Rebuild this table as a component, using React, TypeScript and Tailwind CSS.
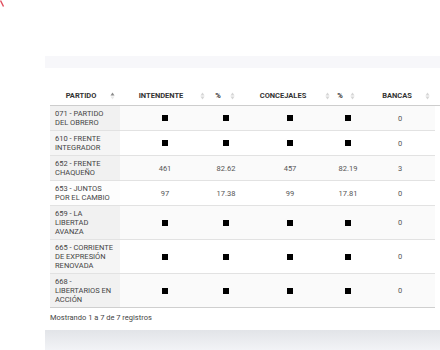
import React from "react";

type Row = {
  name: string[];
  values: (string | null)[];
  bancas: string;
};

const rows: Row[] = [
  { name: ["071 - PARTIDO", "DEL OBRERO"], values: [null, null, null, null], bancas: "0" },
  { name: ["610 - FRENTE", "INTEGRADOR"], values: [null, null, null, null], bancas: "0" },
  { name: ["652 - FRENTE", "CHAQUEÑO"], values: ["461", "82.62", "457", "82.19"], bancas: "3" },
  { name: ["653 - JUNTOS", "POR EL CAMBIO"], values: ["97", "17.38", "99", "17.81"], bancas: "0" },
  { name: ["659 - LA", "LIBERTAD", "AVANZA"], values: [null, null, null, null], bancas: "0" },
  { name: ["665 - CORRIENTE", "DE EXPRESIÓN", "RENOVADA"], values: [null, null, null, null], bancas: "0" },
  { name: ["668 -", "LIBERTARIOS EN", "ACCIÓN"], values: [null, null, null, null], bancas: "0" },
];

const grid = "grid grid-cols-[70px_90px_35px_90px_30px_70px]";

function SortIcon({ active }: { active?: boolean }) {
  return (
    <svg width="5" height="9" viewBox="0 0 5 9" className="block">
      <polygon points="0.5,4 2.5,1 4.5,4" fill={active ? "#8a8a8a" : "#d6d6d6"} />
      <polygon points="0.5,5 2.5,8 4.5,5" fill={active ? "#e8e8e8" : "#d6d6d6"} />
    </svg>
  );
}

function Head({ label, pr, iconRight, active }: { label: string; pr: string; iconRight: string; active?: boolean }) {
  return (
    <div className={`relative flex items-center justify-center ${pr}`}>
      <span>{label}</span>
      <span className={`absolute top-1/2 -translate-y-1/2 ${iconRight}`}>
        <SortIcon active={active} />
      </span>
    </div>
  );
}

function Cell({ value, pr }: { value: string | null; pr?: string }) {
  return (
    <div className={`flex items-center justify-center ${pr ?? ""}`}>
      {value === null ? <span className="inline-block w-[6px] h-[6px] bg-black" /> : <span>{value}</span>}
    </div>
  );
}

export default function App() {
  return (
    <div className="w-[440px] h-[350px] overflow-hidden bg-white text-[#555] [font-family:Roboto,'Liberation_Sans',sans-serif]">
      {/* corner mark */}
      <div className="h-[56px]">
        <svg width="8" height="8" viewBox="0 0 8 8">
          <path d="M0.5 0.5 L3.5 6.5" stroke="#e04a5a" strokeWidth="1.4" />
        </svg>
      </div>

      <div className="ml-[45px] h-[12px] bg-[#f7f7fa]" />

      <div className="pl-[50px] pt-[18px]">
        {/* Header */}
        <div className={`${grid} h-[20px] border-b border-[#cdcdcd] text-[7.5px] font-bold text-[#333] leading-[9px]`}>
          <Head label="PARTIDO" pr="pr-[8px]" iconRight="right-[5px]" active />
          <Head label="INTENDENTE" pr="pr-[8px]" iconRight="right-[5px]" />
          <Head label="%" pr="pr-[19px]" iconRight="right-[10px]" />
          <Head label="CONCEJALES" pr="pr-[14px]" iconRight="right-[5px]" />
          <Head label="%" pr="pr-[20px]" iconRight="right-[10px]" />
          <Head label="BANCAS" pr="pr-[6px]" iconRight="right-[5px]" />
        </div>

        {/* Body */}
        <div className="w-[385px] border-b border-[#cfcfcf] text-[7.5px] leading-[9px]">
          {rows.map((r, i) => {
            const odd = i % 2 === 0;
            const firstBg = i === 3 ? "bg-[#fdfdfd]" : odd ? "bg-[#f1f1f1]" : "bg-[#f5f5f5]";
            return (
              <div
                key={r.name[0]}
                className={`${grid} ${i > 0 ? "border-t border-[#e2e2e2]" : ""} ${odd ? "bg-[#fafafa]" : "bg-white"}`}
              >
                <div className={`pl-[5px] py-[3px] text-[#444] ${firstBg}`}>
                  {r.name.map((l) => (
                    <div key={l} className="whitespace-nowrap">{l}</div>
                  ))}
                </div>
                <Cell value={r.values[0]} />
                <Cell value={r.values[1]} pr="pr-[3px]" />
                <Cell value={r.values[2]} />
                <Cell value={r.values[3]} pr="pr-[4px]" />
                <Cell value={r.bancas} />
              </div>
            );
          })}
        </div>

        <div className="mt-[5px] text-[7.5px] leading-[10px] text-[#444]">Mostrando 1 a 7 de 7 registros</div>
      </div>

      <div className="ml-[45px] mt-[7px] h-[24px] bg-gradient-to-b from-[#e2e4e8] to-[#f5f6f9]" />
    </div>
  );
}
